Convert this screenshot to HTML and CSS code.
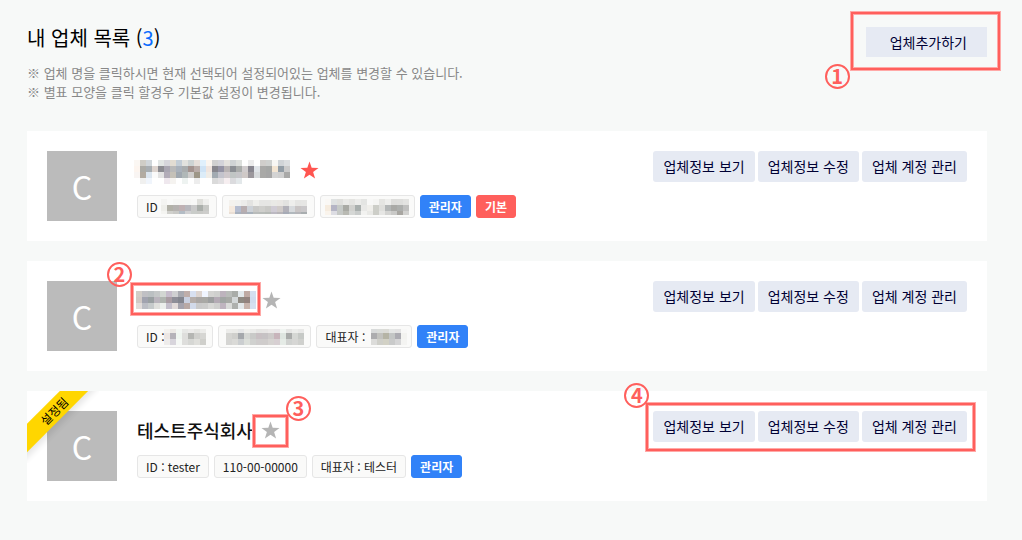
FILE: index.html
```
<!DOCTYPE html>
<html lang="ko">
<head>
  <meta charset="UTF-8">
  <meta name="viewport" content="width=device-width, initial-scale=1.0">
  <title>내 업체 목록</title>
  <link rel="stylesheet" href="styles.css">
</head>
<body>
  <svg class="defs" aria-hidden="true">
    <symbol id="star" viewBox="0 0 20 20">
      <path d="M10 0.5 L12.3 7.2 L19.5 7.3 L13.8 11.6 L15.9 18.5 L10 14.4 L4.1 18.5 L6.2 11.6 L0.5 7.3 L7.7 7.2 Z"/>
    </symbol>
  </svg>
  <div class="container">
    <header class="header">
      <div>
        <h1>내 업체 목록 (<span class="count">3</span>)</h1>
        <p class="desc">※ 업체 명을 클릭하시면 현재 선택되어 설정되어있는 업체를 변경할 수 있습니다.<br>※ 별표 모양을 클릭 할경우 기본값 설정이 변경됩니다.</p>
      </div>
      <div class="marked mark-add">
        <button class="add-btn">업체추가하기</button>
        <span class="frame"></span>
        <span class="num">1</span>
      </div>
    </header>

    <div class="list">
      <div class="card">
        <div class="avatar">C</div>
        <div class="info">
          <div class="name-row">
            <a href="#" class="name mask mask-name-long" data-mosaic="name1"></a>
            <button class="star on" aria-label="기본값"><svg><use href="#star"/></svg></button>
          </div>
          <div class="chips">
            <span class="chip">ID<span class="mask mask-id" data-mosaic="id1"></span></span>
            <span class="chip"><span class="mask mask-no" data-mosaic="no1"></span></span>
            <span class="chip"><span class="mask mask-owner" data-mosaic="owner1"></span></span>
            <span class="chip admin">관리자</span>
            <span class="chip default">기본</span>
          </div>
        </div>
        <div class="actions">
          <button>업체정보 보기</button>
          <button>업체정보 수정</button>
          <button>업체 계정 관리</button>
        </div>
      </div>

      <div class="card">
        <div class="avatar">C</div>
        <div class="info">
          <div class="name-row">
            <div class="marked mark-name">
              <a href="#" class="name mask mask-name" data-mosaic="name2"></a>
              <span class="frame"></span>
              <span class="num">2</span>
            </div>
            <button class="star" aria-label="기본값"><svg><use href="#star"/></svg></button>
          </div>
          <div class="chips">
            <span class="chip">ID :<span class="mask mask-id-short" data-mosaic="id2"></span></span>
            <span class="chip"><span class="mask mask-no" data-mosaic="no2"></span></span>
            <span class="chip">대표자 :<span class="mask mask-person" data-mosaic="owner2"></span></span>
            <span class="chip admin">관리자</span>
          </div>
        </div>
        <div class="actions">
          <button>업체정보 보기</button>
          <button>업체정보 수정</button>
          <button>업체 계정 관리</button>
        </div>
      </div>

      <div class="card">
        <div class="ribbon"><span>설정됨</span></div>
        <div class="avatar">C</div>
        <div class="info">
          <div class="name-row">
            <a href="#" class="name">테스트주식회사</a>
            <div class="marked mark-star">
              <button class="star" aria-label="기본값"><svg><use href="#star"/></svg></button>
              <span class="frame"></span>
              <span class="num">3</span>
            </div>
          </div>
          <div class="chips">
            <span class="chip">ID : tester</span>
            <span class="chip">110-00-00000</span>
            <span class="chip">대표자 : 테스터</span>
            <span class="chip admin">관리자</span>
          </div>
        </div>
        <div class="actions marked mark-actions">
          <button>업체정보 보기</button>
          <button>업체정보 수정</button>
          <button>업체 계정 관리</button>
          <span class="frame"></span>
          <span class="num">4</span>
        </div>
      </div>
    </div>
  </div>
  <script src="mosaic.js"></script>
</body>
</html>
```
FILE: styles.css
```
* {
  box-sizing: border-box;
}
body {
  margin: 0;
  background-color: #f7f9f8;
  font-family: 'Noto Sans CJK KR', 'Noto Sans', sans-serif;
  color: #000;
}
button {
  font-family: inherit;
  border: none;
  padding: 0;
  cursor: pointer;
}
.defs {
  display: none;
}
.container {
  padding: 24px 35px 24px 27px;
}

/* header */
.header {
  display: flex;
  justify-content: space-between;
  align-items: flex-start;
}
h1 {
  margin: 0;
  font-size: 20px;
  line-height: 28px;
  font-weight: 400;
}
.count {
  color: #0a6cff;
}
.desc {
  margin: 11px 0 0;
  font-size: 13px;
  line-height: 19px;
  color: #888;
}
.add-btn {
  display: block;
  height: 30px;
  padding: 0 20px 1px 24px;
  font-size: 14px;
  background-color: #e6eaf3;
  color: #000033;
}

/* company cards */
.list {
  display: flex;
  flex-direction: column;
  gap: 20px;
  margin-top: 30px;
}
.card {
  position: relative;
  display: flex;
  align-items: flex-start;
  padding: 20px;
  background-color: #fff;
}
.avatar {
  width: 70px;
  height: 70px;
  margin-right: 20px;
  background-color: #bbb;
  color: #fff;
  font-size: 32px;
  line-height: 70px;
  text-align: center;
}
.info {
  flex: 1;
}
.name-row {
  display: flex;
  align-items: center;
  gap: 8px;
  height: 38px;
}
.name {
  font-size: 18px;
  font-weight: 500;
  color: #111;
  text-decoration: none;
}
.star {
  display: block;
  width: 19px;
  height: 19px;
  background: none;
  color: #b5b5b5;
}
.star svg {
  display: block;
  width: 19px;
  height: 19px;
  fill: currentColor;
}
.star.on {
  color: #ff5550;
}
.chips {
  display: flex;
  gap: 5px;
  margin-top: 6px;
}
.chip {
  display: flex;
  align-items: center;
  height: 23px;
  padding: 0 8px;
  border: 1px solid #e6e6e6;
  border-radius: 3px;
  background-color: #fafaf9;
  font-size: 12px;
  color: #222;
  white-space: nowrap;
}
.chip.admin,
.chip.default {
  color: #fff;
  font-weight: 700;
}
.chip.admin {
  border-color: #3182f8;
  background-color: #3182f8;
}
.chip.default {
  border-color: #ff5f5c;
  background-color: #ff5f5c;
}
.actions {
  display: flex;
  gap: 3px;
}
.actions button {
  height: 31px;
  padding: 0 10px 2px;
  border-radius: 3px;
  font-size: 14px;
  background-color: #e6eaf3;
  color: #000033;
}

/* pixelated private text */
.mask {
  display: flex;
}
.mask svg {
  flex: none;
}
.mask-name-long {
  width: 158px;
  margin-left: -3px;
  padding-top: 4px;
}
.mask-name {
  width: 117px;
  justify-content: center;
}
.mask-id {
  width: 47px;
  margin-left: 3px;
}
.mask-id-short {
  width: 40px;
}
.mask-no {
  width: 75px;
  justify-content: center;
}
.mask-owner {
  width: 77px;
  justify-content: center;
}
.mask-person {
  width: 32px;
  margin-left: 6px;
}

/* corner ribbon */
.ribbon {
  position: absolute;
  top: 0;
  left: 0;
  width: 72px;
  height: 72px;
  overflow: hidden;
}
.ribbon span {
  position: absolute;
  top: 10px;
  left: -33px;
  width: 120px;
  background-color: #ffd600;
  box-shadow: 0 4px 6px rgba(0, 0, 0, 0.1);
  font-size: 12px;
  line-height: 20px;
  text-align: center;
  transform: rotate(-45deg);
}

/* numbered marks over the controls */
.marked {
  position: relative;
}
.frame {
  position: absolute;
  border: 2px solid #ff5f5c;
  box-shadow: 0 0 0 1px #ffa9a7, inset 0 0 0 1px #ffa9a7;
  pointer-events: none;
}
.num {
  position: absolute;
  width: 25px;
  height: 25px;
  border: 2px solid #ff5f5c;
  border-radius: 50%;
  color: #ff5f5c;
  font-size: 20px;
  font-weight: 700;
  line-height: 20px;
  text-align: center;
}
.mark-add {
  margin-top: 3px;
}
.mark-add .frame {
  inset: -15px -13px -13px -15px;
}
.mark-add .num {
  left: -41px;
  top: 37px;
}
.mark-name .frame {
  inset: -8px -6px -6px -6px;
}
.mark-name .num {
  left: -30px;
  top: -29px;
}
.mark-star .frame {
  inset: -6px -8px -7px -8px;
}
.mark-star .num {
  left: 25px;
  top: -25px;
}
.mark-actions .frame {
  inset: -8px -8px -9px -7px;
}
.mark-actions .num {
  left: -29px;
  top: -28px;
}
```
FILE: mosaic.js
```
// size of one mosaic block
const CELL = 6;

// top: pixels cut off the first row, height: drawn height
const mosaics = {
  name1: { top: 0, height: 24, rows: [
    "fbf7f3 cfcdc6 d0d6da ffffff e2e6e5 d6d6dc e2dcd2 c3cdd6 e2e2de cdd3d3 e6dfda e0f0fc fbf5ef d0d0d0 d3d3d9 e4e2de cfd3d4 dcdfdc ffffff ececec ffffff d0cecb cfd1cf f8f7f4 d0d4d7 dbdee0",
    "fdf5ef acaba5 a8aeb2 ddd4cf 8c8c92 a9a6b2 b9b9b9 a9b1bb a9adae a3938f b9aca8 cfe3f5 f0e5df 87868d 9594a5 b9b4b4 8b8f94 a9acaa d0cccd 88868f e0e4e8 a9a9a7 a5a7a5 f3e5d2 929da6 cacaca",
    "f9f5f3 b2aba1 dbe5ef fafafa e3e3e3 b2acb8 c5c1b8 a0a8b0 b0b8b8 cfcdcc 9d9687 dcecf8 f0ece6 a2aab1 c3c3cc cfc8cb c0c5c4 c5c5c8 cfc9c7 9b979c d7dadc a9a9a7 a6a6a6 d3d3d3 cfcfcf a9a9a8",
    "ffffff f0f0ef f0f5fc ffffff ffffff efe8ee f5f3f0 ffffff eef3f1 ffffff ededed ffffff ffffff dadada e2e0e2 f6eef0 dbdbde e3e8ea"
  ] },
  name2: { top: 0, height: 18, rows: [
    "d2cec8 c0c0c4 bbc0c2 c5c8c8 d2d6d2 c6bccb cfcfd1 a8a9b0 bfaeaa d8e0f0 ddd4cf f0f5ff d4d4d2 cfd0ce bdb3bd b9bcb9 a9aca8 e3e9ec bfaaa3 d4dfef",
    "d0c9c5 a1a3af 9aa0a2 bab5bd b0b5b0 a99ca3 8e8e98 84868f c9d0e0 b6aeaa aaa7a5 a9a9a5 9d9fa0 b4abb5 a2a6a4 a8aaa6 d3d7d8 8f8a82 93837e d0dcee",
    "e1dcda bcbec5 c6cacb e0e0dd ecefec c4bfcb e2dad9 a5a3ad b9a9a5 d2daea cacaca cccccb d8d8d6 d0d0cf bfb4bf dadbd9 aeb0ad e4e8ea c9b5ad d5e0f0"
  ] },
  id1: { top: 0, height: 15, rows: [
    "f4f4f2 f9f9f8 f6f6f4 f6f6f4 f6f6f4 f8f8f7 dfdfdb f0f0ee",
    "eeeeea b2b1a8 b5b2b0 bfb1b3 b8b8bd cacaca abafab c8c9c6",
    "f4f4f1 d0d0cc c9c9c6 b3bcc5 d1d1d3 c9ccc9 c9cac7 cdcdcb"
  ] },
  no1: { top: 0, height: 14, rows: [
    "f4f2ee f1f1ef ececea e3e3e1 efefec e6e6e4 e6e6e4 e9e9e6 e9e7e4 e2e2e0 eeeeec e5e5e3 e6e6e4",
    "f5eadf b5bdd0 b8aeb0 cdd2d8 c9c9c7 cfcfcc c9c9c6 d0ccd5 d0cbc9 b2b1b9 d7dadd c9c5c5 cac8ca",
    "eadfd5 a8b1be b0adb3 a8b1bb b9bcbb b7bbb8 b5b9b5 bcb9c2 b8b5b9 a6abb6 b1b8bd b5b5b9 a8adaf"
  ] },
  owner1: { top: 0, height: 16, rows: [
    "faf8f5 dfe2e2 dfdfdc e9e9e6 e4e4e1 ececea e4e5e3 f8f8f7 f5f5f3 e5e5e2 eeeeec dddddb dededc e3e3e1",
    "f6ecdf b5b5c5 c6cac7 a9aaa4 d1d1ce a9afad e9e9e7 f0efeb cdcec8 dfdfdc b4b7b7 a9a9a6 adafad c0c0bf",
    "faf4ec dddde3 c6c9c6 b9bab3 d5d7d5 c9cccb f2f2f0 e9e9e6 cdcec8 e6e6e4 d4d4d2 c9c9c7 a8a6a1 d2d2d0"
  ] },
  id2: { top: 2, height: 16, rows: [
    "f4f2ef ebe8e5 f2f6f3 e7e8e6 ecebea e6e6e3 ececea",
    "ece6e3 b5b2b9 eff5f0 dededc b5b6b3 d0d0cd d6d6d3",
    "eeeceb d8d5dc f5f8f5 dededc d6d7d4 dfdfdb cfcfcb"
  ] },
  no2: { top: 2, height: 16, rows: [
    "ececea ebebe8 e5e6e7 efefec ebebe9 e5e5e3 e7e5e4 ebe8e8 e9e6e8 f0f4f1 e5e5e4 ecedeb e8e8e7",
    "d5d5d2 cfcfcc a5a8ac d5d7d4 c9cac8 c8c0c3 c6c2c4 cdcac9 c8b4bb dee5e0 a9abaa d5d7d4 c6c9c6",
    "d5d5d3 dadad7 cbced0 dcdfda d0d1cf cfcccc cfcccb d6d3d1 d7cfd2 e5ebe6 d0d2d0 d6d6d4 cfd0cd"
  ] },
  owner2: { top: 2, height: 16, rows: [
    "d8dada dadcd9 dbdbd6 e4e6e5 e3e3e3 f8f8f7",
    "acacae c2c2be b5b4a5 c3c6c5 acacb2 f3f3f0",
    "dcdcda cfcfc9 d2d1c5 c9caca d5d5d6 f4f4f2"
  ] }
};

document.querySelectorAll("[data-mosaic]").forEach(el => {
  const m = mosaics[el.dataset.mosaic];
  const rows = m.rows.map(row => row.split(" "));
  const width = rows[0].length * CELL;
  let rects = "";
  rows.forEach((row, y) => {
    row.forEach((color, x) => {
      rects += `<rect x="${x * CELL}" y="${y * CELL}" width="${CELL}" height="${CELL}" fill="#${color}"/>`;
    });
  });
  el.innerHTML = `<svg width="${width}" height="${m.height}" viewBox="0 ${m.top} ${width} ${m.height}" shape-rendering="crispEdges">${rects}</svg>`;
});
```
